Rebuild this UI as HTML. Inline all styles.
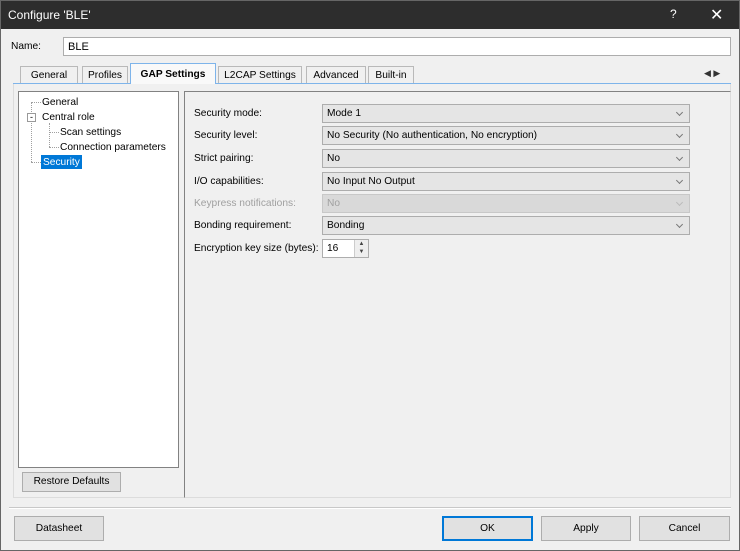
<!DOCTYPE html>
<html><head><meta charset="utf-8"><style>
*{box-sizing:border-box;margin:0;padding:0}
body{width:740px;height:551px;background:#f0f0f0;font-family:"Liberation Sans",sans-serif;font-size:10.2px;color:#000;position:relative;overflow:hidden}
.a{position:absolute}
.frame{left:0;top:0;width:740px;height:551px;border:1px solid #666;pointer-events:none}
.title{left:0;top:0;width:740px;height:29px;background:#2d2d2d;color:#fff;font-size:12px}
.combo{position:absolute;left:322px;width:368px;height:19px;background:#e5e5e5;border:1px solid #adadad;padding:3px 0 0 4px}
.combo:after{content:"";position:absolute;right:7px;top:5px;width:4px;height:4px;border-right:1px solid #777;border-bottom:1px solid #777;transform:rotate(45deg)}
.combo.dis{color:#a0a0a0;background:#d9d9d9;border-color:#c8c8c8}
.combo.dis:after{border-color:#bbb}
.lbl{position:absolute;left:194px}
.btn{position:absolute;height:25px;background:#e1e1e1;border:1px solid #adadad;text-align:center;line-height:23px}
.tab{position:absolute;top:66px;height:17px;border:1px solid #b9b9b9;border-bottom:none;background:#f0f0f0;padding-top:3px;text-align:center}
.tree div{position:absolute;white-space:nowrap}
.ln{position:absolute;border-color:#a0a0a0;border-style:dotted;border-width:0}
</style></head><body>
<div class="a title"><span class="a" style="left:8px;top:8px">Configure 'BLE'</span><span class="a" style="left:670px;top:7px;font-size:12px">?</span><span class="a" style="left:710px;top:5px;font-size:16px">✕</span></div>
<div class="a" style="left:11px;top:41px">Name:</div>
<div class="a" style="left:63px;top:37px;width:668px;height:19px;background:#fff;border:1px solid #adadad;padding:3px 0 0 4px;font-size:11px">BLE</div>
<div class="tab" style="left:20px;width:58px">General</div>
<div class="tab" style="left:82px;width:46px">Profiles</div>
<div class="tab" style="left:130px;width:86px;top:63px;height:21px;background:#f9f9f9;border-color:#7eb4ea;font-weight:bold;padding-top:5px;z-index:2">GAP Settings</div>
<div class="tab" style="left:218px;width:84px">L2CAP Settings</div>
<div class="tab" style="left:306px;width:60px">Advanced</div>
<div class="tab" style="left:368px;width:46px">Built-in</div>
<div class="a" style="left:704px;top:68px;font-size:9px;color:#333">◀ ▶</div>
<div class="a" style="left:13px;top:83px;width:718px;height:1px;background:#7eb4ea"></div>
<div class="a" style="left:13px;top:84px;width:718px;height:414px;border:1px solid #dcdcdc;border-top:none"></div>
<div class="a tree" style="left:18px;top:91px;width:161px;height:377px;background:#fff;border:1px solid #828282">
 <div class="ln" style="left:12px;top:10px;height:60px;border-left-width:1px"></div>
 <div class="ln" style="left:12px;top:10px;width:10px;border-top-width:1px"></div>
 <div class="ln" style="left:12px;top:70px;width:10px;border-top-width:1px"></div>
 <div class="ln" style="left:30px;top:31px;height:24px;border-left-width:1px"></div>
 <div class="ln" style="left:30px;top:40px;width:10px;border-top-width:1px"></div>
 <div class="ln" style="left:30px;top:55px;width:10px;border-top-width:1px"></div>
 <div style="left:8px;top:21px;width:9px;height:9px;border:1px solid #999;background:#fff;font-size:9px;line-height:6px;text-align:center">-</div>
 <div style="left:23px;top:5px">General</div>
 <div style="left:23px;top:20px">Central role</div>
 <div style="left:41px;top:35px">Scan settings</div>
 <div style="left:41px;top:50px">Connection parameters</div>
 <div style="left:22px;top:63px;background:#0078d7;color:#fff;padding:2px 2px 1px">Security</div>
</div>
<div class="btn" style="left:22px;top:472px;width:99px;height:20px;line-height:18px">Restore Defaults</div>
<div class="a" style="left:184px;top:91px;width:547px;height:407px;border:1px solid #828282;border-right-color:#dcdcdc;border-bottom-color:#dcdcdc"></div>
<div class="lbl" style="top:108px">Security mode:</div><div class="combo" style="top:104px">Mode 1</div>
<div class="lbl" style="top:130px">Security level:</div><div class="combo" style="top:126px">No Security (No authentication, No encryption)</div>
<div class="lbl" style="top:153px">Strict pairing:</div><div class="combo" style="top:149px">No</div>
<div class="lbl" style="top:176px">I/O capabilities:</div><div class="combo" style="top:172px">No Input No Output</div>
<div class="lbl" style="top:198px;color:#a0a0a0">Keypress notifications:</div><div class="combo dis" style="top:194px">No</div>
<div class="lbl" style="top:220px">Bonding requirement:</div><div class="combo" style="top:216px">Bonding</div>
<div class="lbl" style="top:243px">Encryption key size (bytes):</div>
<div class="a" style="left:322px;top:239px;width:47px;height:19px;background:#fff;border:1px solid #adadad;padding:3px 0 0 4px">16</div>
<div class="a" style="left:354px;top:240px;width:14px;height:17px;background:#eee;border-left:1px solid #ccc;font-size:6px;line-height:8px;text-align:center;color:#444">▲<br>▼</div>
<div class="a" style="left:9px;top:507px;width:722px;height:2px;border-top:1px solid #c8c8c8;border-bottom:1px solid #fff"></div>
<div class="btn" style="left:14px;top:516px;width:90px">Datasheet</div>
<div class="btn" style="left:442px;top:516px;width:91px;border:2px solid #0078d7;line-height:21px">OK</div>
<div class="btn" style="left:541px;top:516px;width:90px">Apply</div>
<div class="btn" style="left:639px;top:516px;width:91px">Cancel</div>
<div class="a frame"></div>
</body></html>
